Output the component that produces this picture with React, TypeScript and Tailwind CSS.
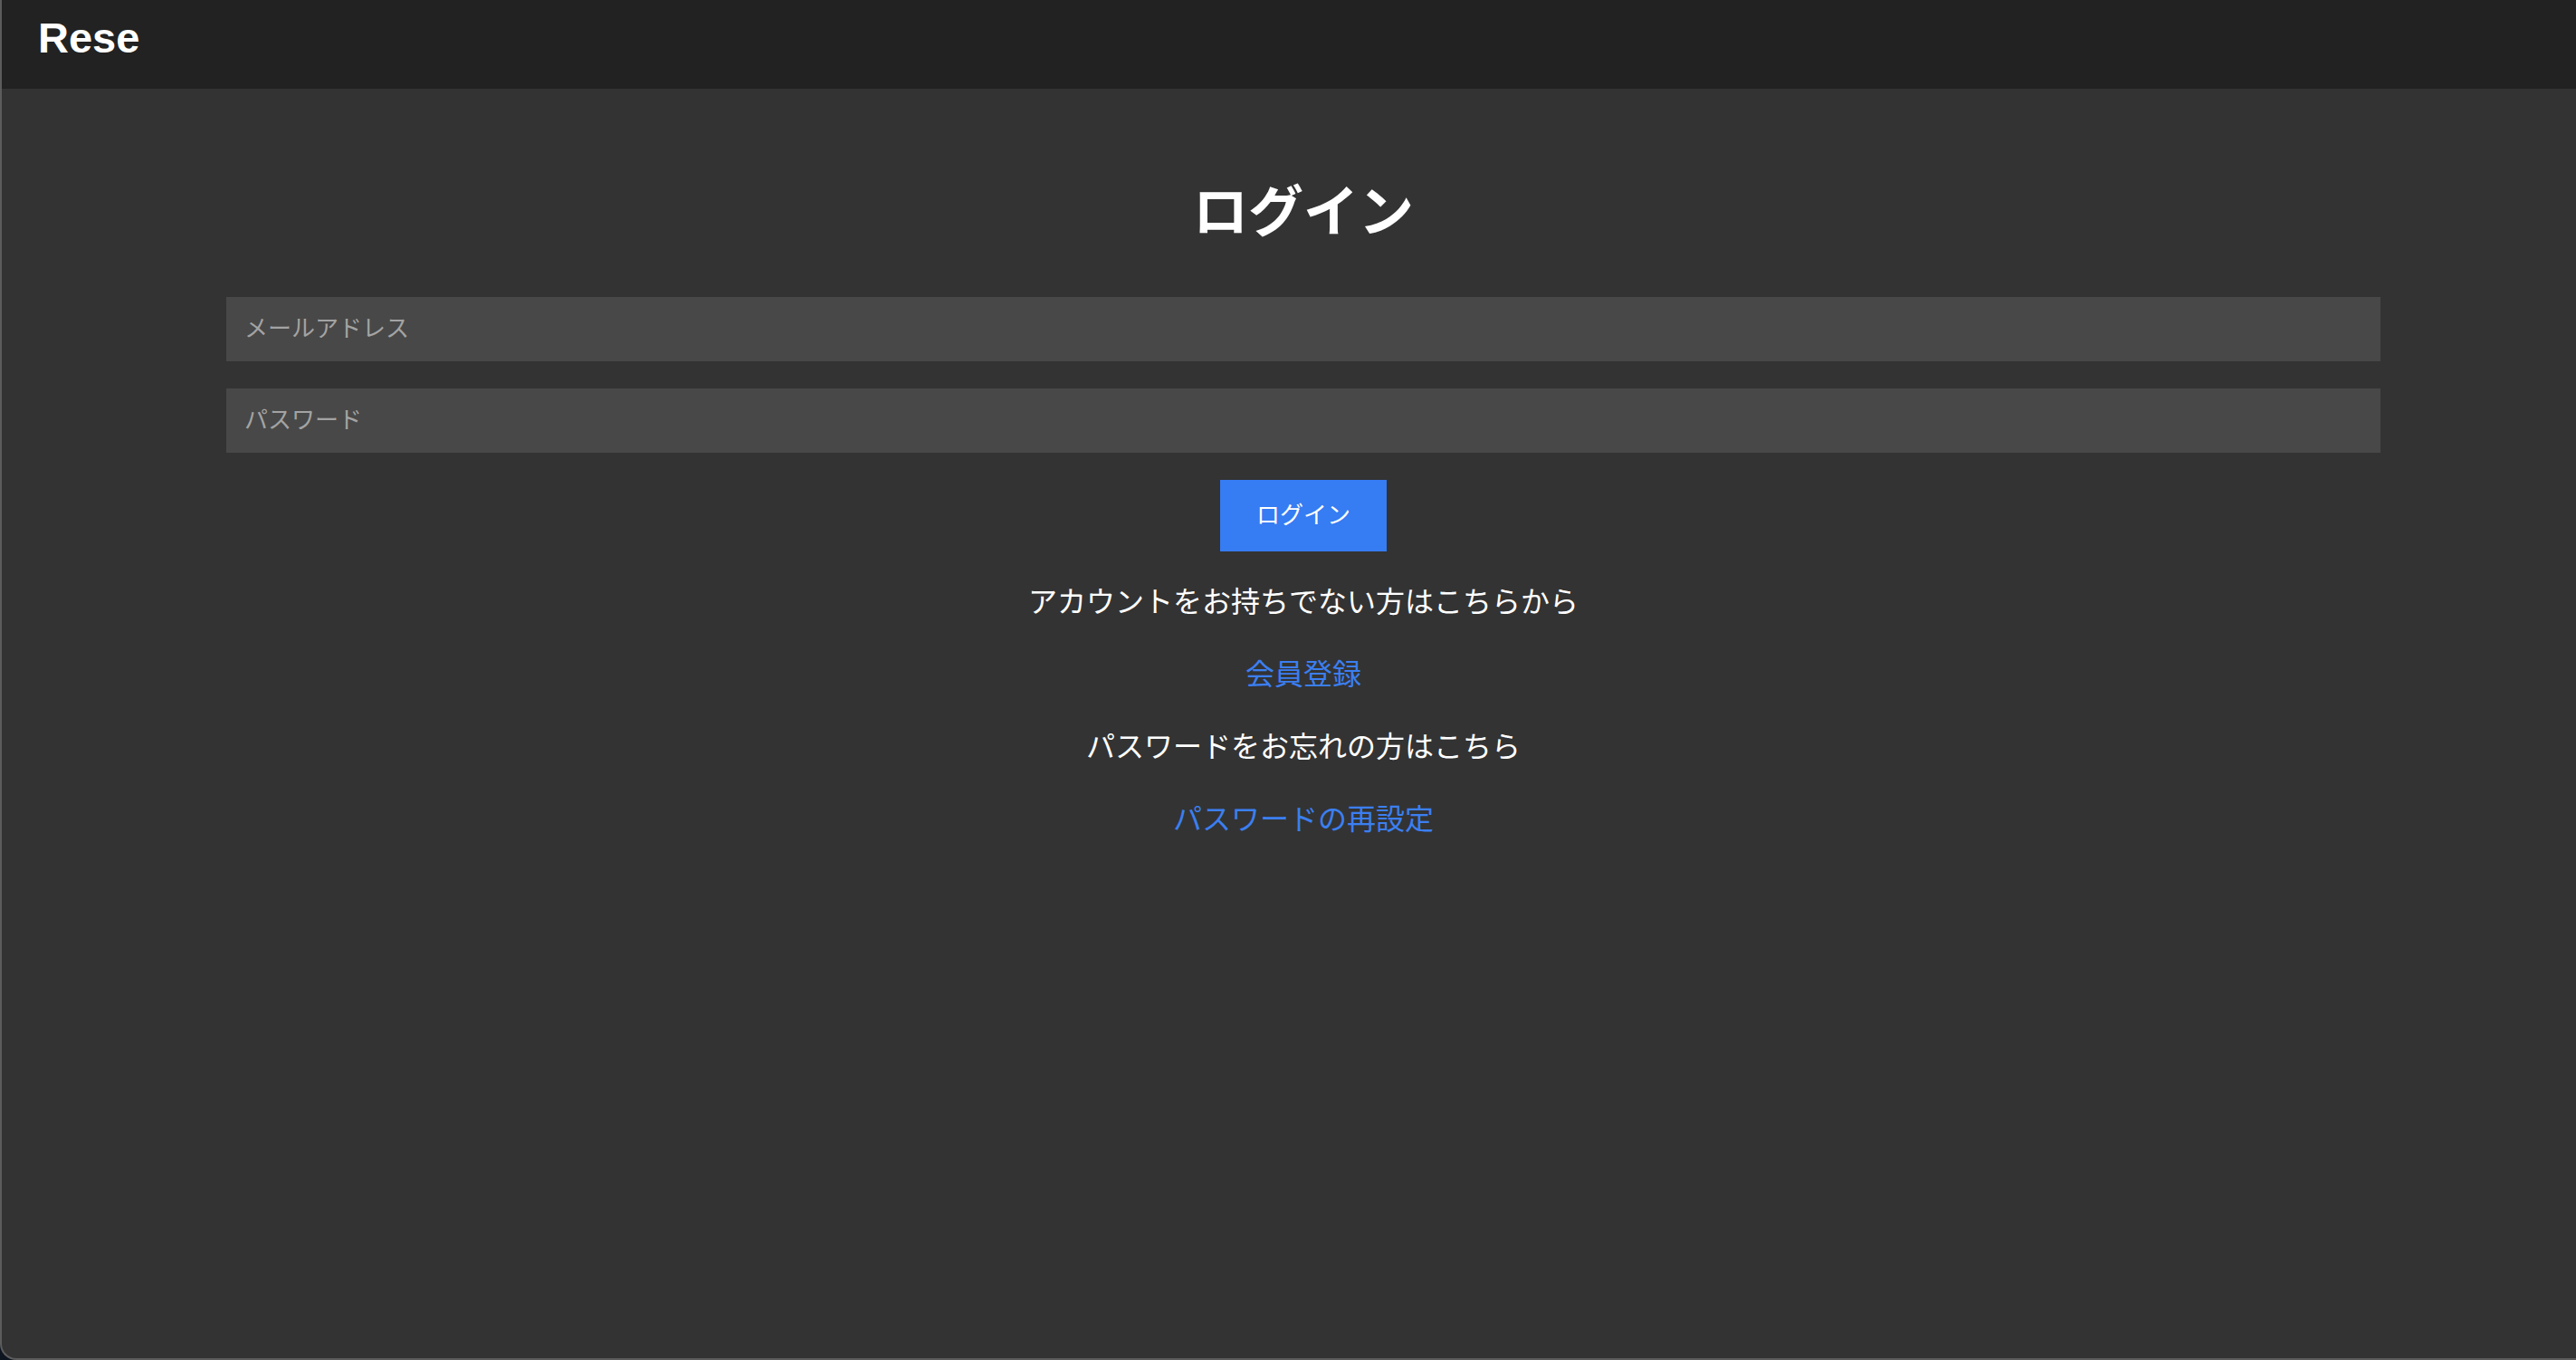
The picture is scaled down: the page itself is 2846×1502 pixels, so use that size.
import { useState } from "react";

const font = { fontFamily: '"Liberation Sans", "Noto Sans CJK JP", sans-serif' };

export default function App() {
  const [email, setEmail] = useState("");
  const [password, setPassword] = useState("");

  return (
    <div className="h-[1502px] w-[2846px] bg-[#0d1520]" style={font}>
      <div className="flex h-full flex-col overflow-hidden rounded-bl-[18px] border-b-2 border-l-2 border-[#5c5c5c] bg-[#333333]">
        {/* ヘッダー */}
        <header className="flex h-[98px] shrink-0 items-start bg-[#222222] pl-[40px] pt-[14px]">
          <h1 className="text-[47px] font-bold leading-[56px] text-white">Rese</h1>
        </header>

        {/* ログインフォーム */}
        <main className="flex flex-col items-center pl-[248px] pr-[216px] pt-[106px]">
          <h2 className="h-[62px] text-[61px] font-bold leading-[62px] text-white">ログイン</h2>

          <form
            className="mt-[62px] flex w-full flex-col items-center"
            onSubmit={(e) => e.preventDefault()}
          >
            <input
              type="email"
              value={email}
              onChange={(e) => setEmail(e.target.value)}
              placeholder="メールアドレス"
              className="h-[71px] w-full bg-[#484848] px-[20px] text-[26px] text-white outline-none placeholder:text-[#a3a3a3]"
            />
            <input
              type="password"
              value={password}
              onChange={(e) => setPassword(e.target.value)}
              placeholder="パスワード"
              className="mt-[30px] h-[71px] w-full bg-[#484848] px-[20px] text-[26px] text-white outline-none placeholder:text-[#a3a3a3]"
            />
            <button
              type="submit"
              className="mt-[30px] h-[79px] w-[184px] bg-[#367cf2] text-[26px] text-white"
            >
              ログイン
            </button>
          </form>

          <div className="mt-[36px] flex flex-col items-center gap-[40px] text-[32px] leading-[40px]">
            <p className="text-white">アカウントをお持ちでない方はこちらから</p>
            <a href="#" className="text-[#3b7ff0]">会員登録</a>
            <p className="text-white">パスワードをお忘れの方はこちら</p>
            <a href="#" className="text-[#3b7ff0]">パスワードの再設定</a>
          </div>
        </main>
      </div>
    </div>
  );
}
